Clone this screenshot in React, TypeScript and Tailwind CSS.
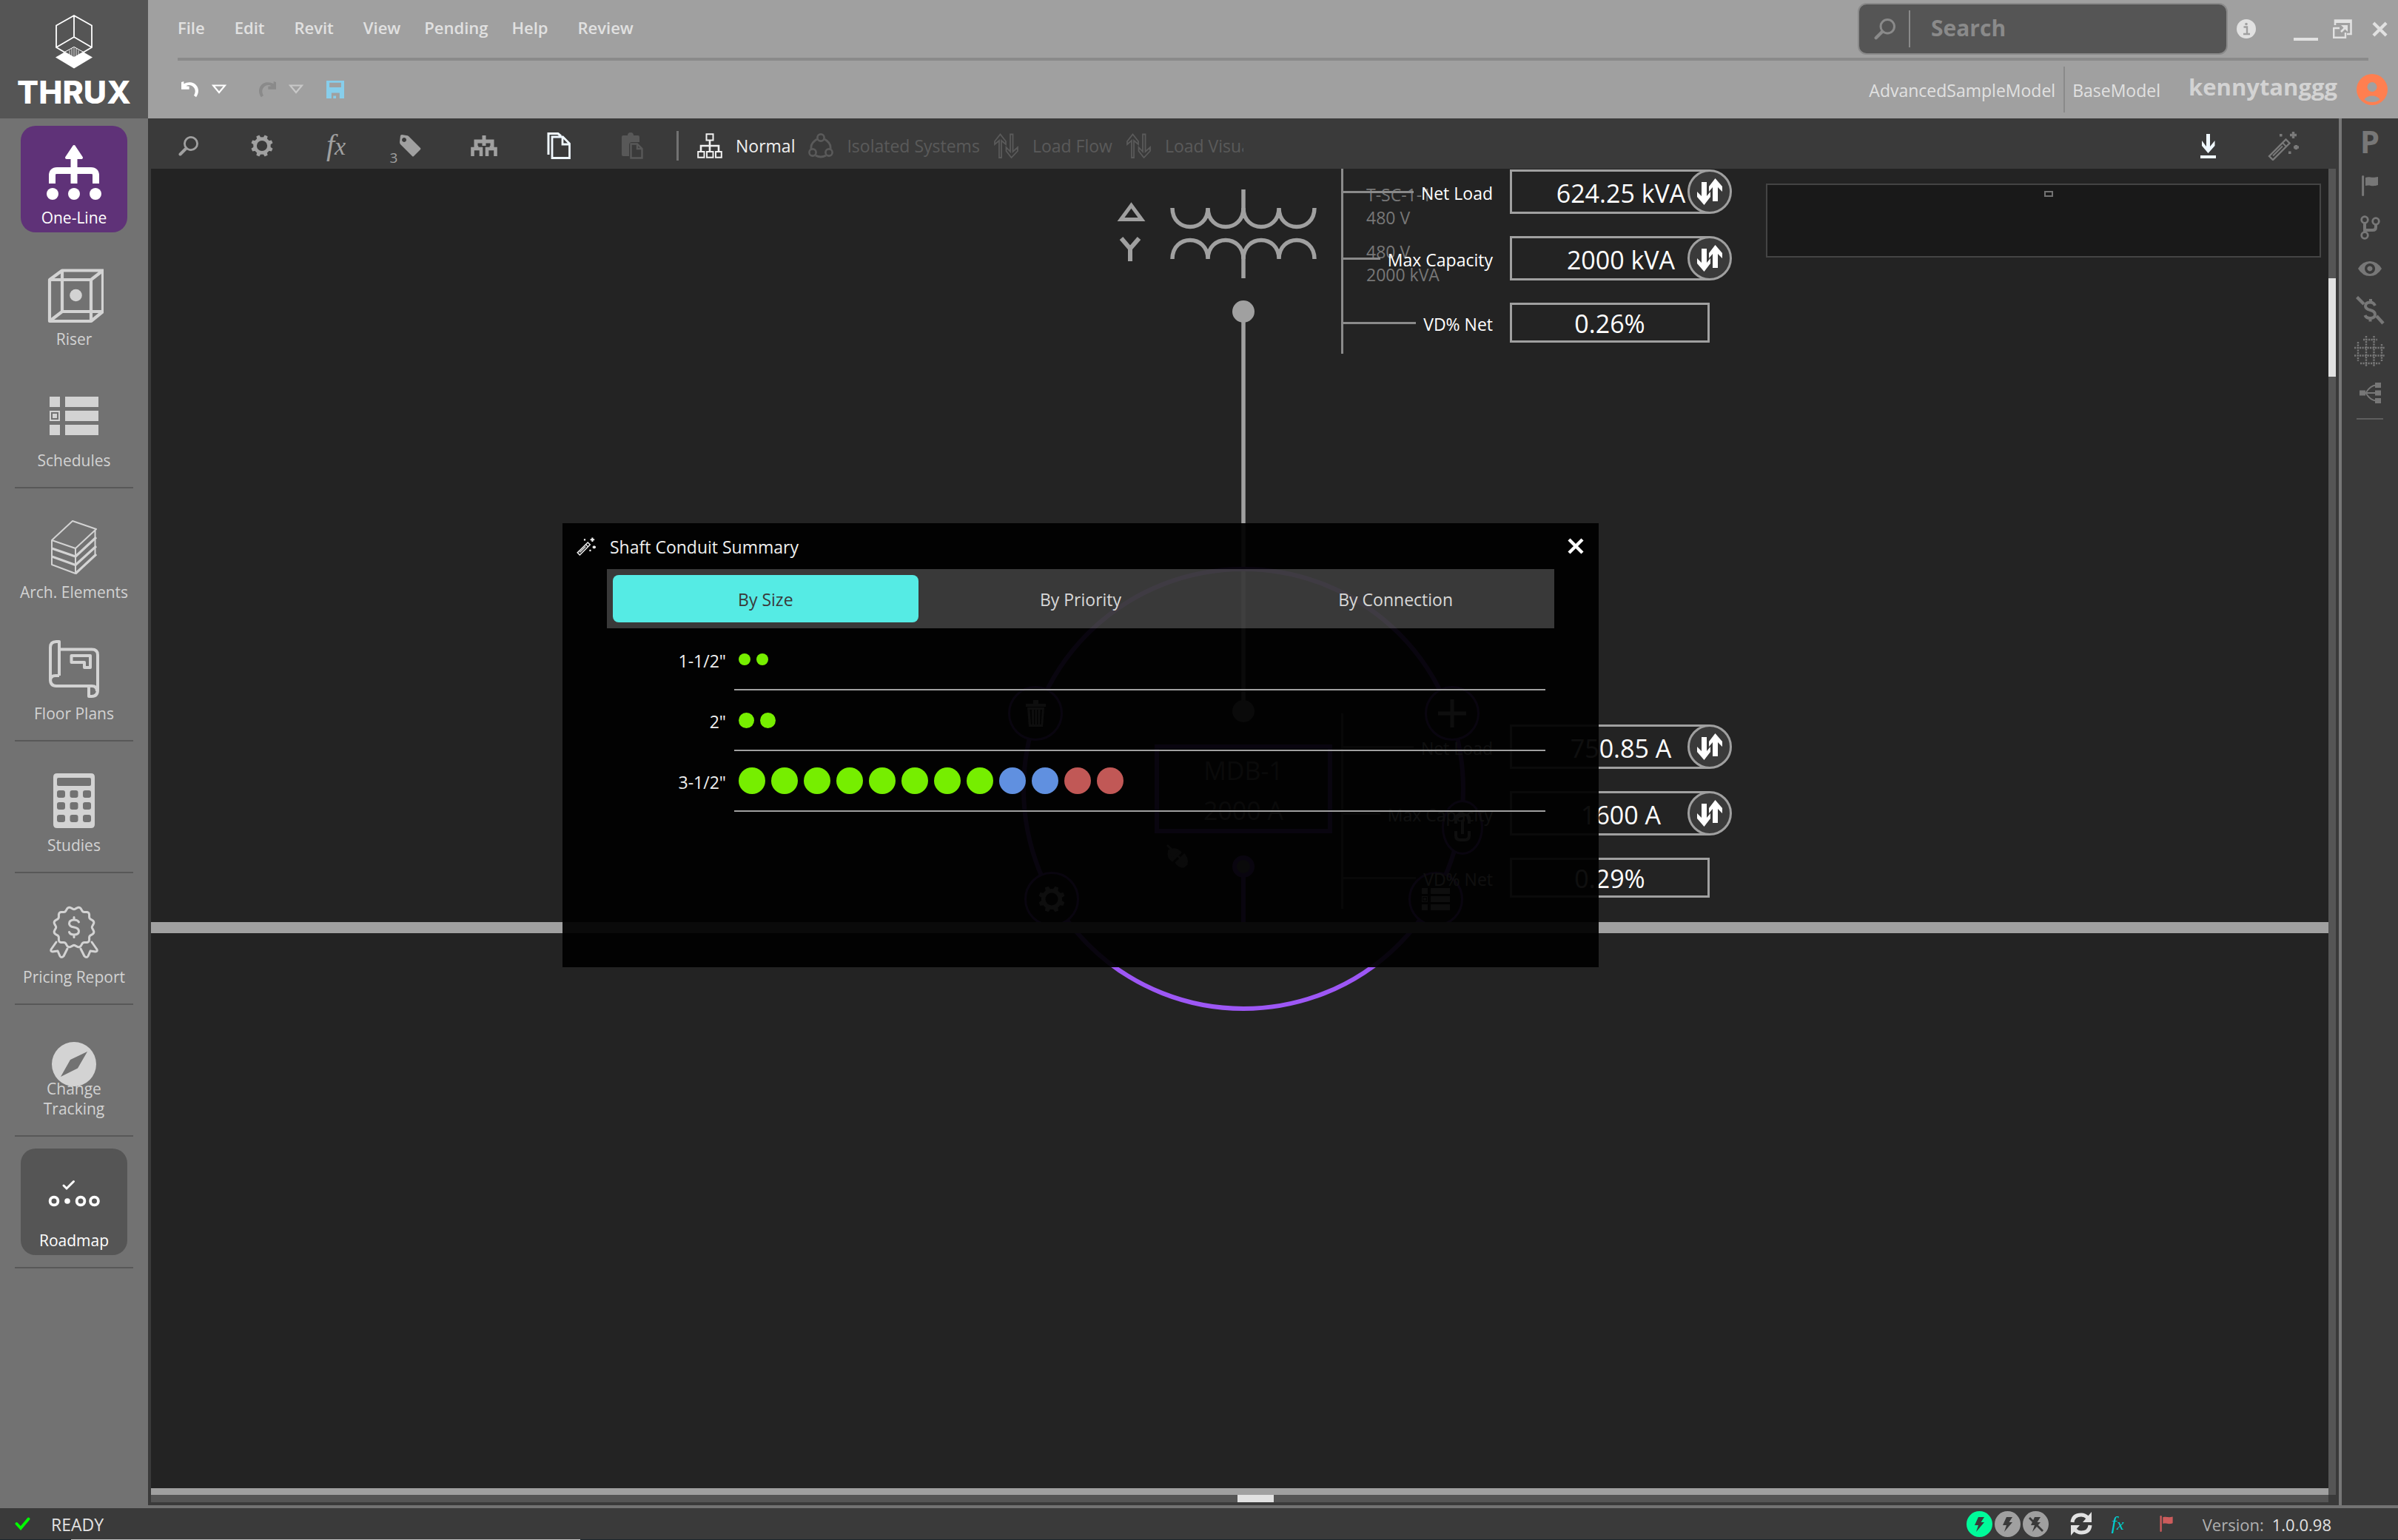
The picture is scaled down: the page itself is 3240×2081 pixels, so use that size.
import React from "react";

type SvgProps = { box: string; className: string; children: React.ReactNode };

function Svg({ box, className, children }: SvgProps) {
  return (
    <svg viewBox={box} className={"shrink-0 " + className} fill="none" aria-hidden="true">
      {children}
    </svg>
  );
}

/* ---------- shared icons ---------- */

function SearchIcon({ className }: { className: string }) {
  return (
    <Svg box="0 0 27 27" className={className}>
      <circle cx="17" cy="10" r="8.6" stroke="currentColor" strokeWidth="2.8" />
      <path d="M10 17L2.5 24.5" stroke="currentColor" strokeWidth="4" strokeLinecap="round" />
    </Svg>
  );
}

function GearIcon({ className }: { className: string }) {
  const teeth = [22.5, 67.5, 112.5, 157.5, 202.5, 247.5, 292.5, 337.5];
  return (
    <Svg box="-15 -15 30 30" className={className}>
      <circle r="9.4" stroke="currentColor" strokeWidth="4.6" />
      {teeth.map((a) => (
        <path key={a} d="M-2.9 -10.5L-2.1 -14.8H2.1L2.9 -10.5z" fill="currentColor" transform={`rotate(${a})`} />
      ))}
    </Svg>
  );
}

function WandIcon({ className }: { className: string }) {
  return (
    <Svg box="0 0 42 39" className={className}>
      <path d="M2 33L24.500 10.500L29.500 15.500L7 38z" stroke="currentColor" strokeWidth="2.4" />
      <path d="M20 15L25 20M7 32.500L20 19.500" stroke="currentColor" strokeWidth="2" />
      <path d="M34.500 0V9M30 4.500H39" stroke="currentColor" strokeWidth="3.4" />
      <path d="M38.300 18V24M35 21H42" stroke="currentColor" strokeWidth="3.600" />
      <path d="M16 3h3.500v3.500H16zM28 26.500h3.500V30H28z" fill="currentColor" />
    </Svg>
  );
}

function FlagIcon({ className }: { className: string }) {
  return (
    <Svg box="0 0 22 28" className={className}>
      <path d="M1.600 1.500V26.500" stroke="currentColor" strokeWidth="3" strokeLinecap="round" />
      <path d="M5 3c5-2 8 1 17-1v11c-8 3-11-1-17 1z" fill="currentColor" />
    </Svg>
  );
}

function CloseIcon({ className }: { className: string }) {
  return (
    <Svg box="0 0 22 22" className={className}>
      <path d="M2 2L20 20M20 2L2 20" stroke="currentColor" strokeWidth="4.400" />
    </Svg>
  );
}

function ListIcon({ className }: { className: string }) {
  return (
    <Svg box="7 14 66 52" className={className}>
      <path
        fillRule="evenodd"
        fill="currentColor"
        d="M7 14H21V28H7zM28 14H73V28H28zM7 33H21V47H7zM9 35V45H19V35zM11 37H17V43H11zM28 33H73V47H28zM7 52H21V66H7zM28 52H73V66H28z"
      />
    </Svg>
  );
}

function SwapIcon({ className }: { className: string }) {
  return (
    <Svg box="0 0 36 36" className={className}>
      <path d="M7 5H14V24L19 18V25L10.500 36L1 25V18L7 24z" fill="currentColor" />
      <path d="M29 31H22V12L17 18V11L25.500 0L35 11V18L29 12z" fill="currentColor" />
    </Svg>
  );
}

/* ---------- left navigation ---------- */

function waveBadge() {
  const pts: string[] = [];
  for (let i = 0; i <= 180; i++) {
    const a = (i / 180) * Math.PI * 2;
    const r = 26 + 1.7 * Math.cos(a * 12 + Math.PI);
    pts.push(`${(40 + r * Math.sin(a)).toFixed(1)} ${(33 - r * Math.cos(a)).toFixed(1)}`);
  }
  return "M" + pts.join("L") + "z";
}

const navIcons: Record<string, React.ReactNode> = {
  oneline: (
    <>
      <path d="M40 4L50 19H30z" fill="currentColor" stroke="currentColor" strokeWidth="4" strokeLinejoin="round" />
      <path d="M40 18V54M10.500 54V43Q10.500 36.500 17 36.500H63Q69.500 36.500 69.500 43V54" stroke="currentColor" strokeWidth="9" />
      <circle cx="11" cy="68" r="8" fill="currentColor" />
      <circle cx="40" cy="68" r="8" fill="currentColor" />
      <circle cx="69" cy="68" r="8" fill="currentColor" />
    </>
  ),
  riser: (
    <>
      <path
        d="M7 20H63V76H7zM24 7.500H79V63H24zM7 20L24 7.500M63 20L79 7.500M63 76L79 63M7 76L24 63"
        stroke="currentColor"
        strokeWidth="4.200"
        strokeLinejoin="round"
      />
      <circle cx="42.500" cy="41" r="8.300" fill="currentColor" />
    </>
  ),
  schedules: (
    <path
      fillRule="evenodd"
      fill="currentColor"
      d="M7 14H21V28H7zM28 14H73V28H28zM7 33H21V47H7zM9 35V45H19V35zM11 37H17V43H11zM28 33H73V47H28zM7 52H21V66H7zM28 52H73V66H28z"
    />
  ),
  arch: (
    <>
      <path
        d="M38 4L70 15L42 41L10 30zM10 30V63L42 75L70 49M42 41V75M68.500 17V49"
        stroke="currentColor"
        strokeWidth="2"
        strokeLinejoin="round"
      />
      <path d="M10 41L42 52L70 26M10 52L42 63.500L70 38M42 75L70 49" stroke="currentColor" strokeWidth="3.200" strokeLinejoin="round" />
    </>
  ),
  floor: (
    <g stroke="currentColor" strokeWidth="4" strokeLinejoin="round">
      <path d="M20 49V3H16Q8 3 8 11V54Q8 63 16 63H60M8 56Q8 49 15 49H20" />
      <path d="M20 13.500H64Q72 13.500 72 21V68Q72 77 64 77H60V63H64Q71 63 71 70" />
      <path d="M36.500 22H62V38H54V31H36.500z" />
    </g>
  ),
  studies: (
    <path
      fillRule="evenodd"
      fill="currentColor"
      d="M17 3H63Q68 3 68 8V72Q68 77 63 77H17Q12 77 12 72V8Q12 3 17 3zM19 9Q17 9 17 11V18Q17 20 19 20H61Q63 20 63 18V11Q63 9 61 9zM20 26q-3 0-3 3v4q0 3 3 3h5q3 0 3-3v-4q0-3-3-3zM37.500 26q-3 0-3 3v4q0 3 3 3h5q3 0 3-3v-4q0-3-3-3zM55 26q-3 0-3 3v4q0 3 3 3h5q3 0 3-3v-4q0-3-3-3zM20 42q-3 0-3 3v4q0 3 3 3h5q3 0 3-3v-4q0-3-3-3zM37.500 42q-3 0-3 3v4q0 3 3 3h5q3 0 3-3v-4q0-3-3-3zM55 42q-3 0-3 3v4q0 3 3 3h5q3 0 3-3v-4q0-3-3-3zM20 59q-3 0-3 3v4q0 3 3 3h5q3 0 3-3v-4q0-3-3-3zM37.500 59q-3 0-3 3v4q0 3 3 3h5q3 0 3-3v-4q0-3-3-3zM55 59q-3 0-3 3v4q0 3 3 3h5q3 0 3-3v-4q0-3-3-3z"
    />
  ),
  pricing: (
    <g stroke="currentColor" strokeWidth="3" strokeLinejoin="round" strokeLinecap="round">
      <path d={waveBadge()} />
      <path d="M46.500 26Q45 23 40 23Q33.500 23 33.500 28Q33.500 32 40 33Q46.500 34 46.500 38.500Q46.500 43 40 43Q34.500 43 33.500 39.500M40 19.500V23M40 43V46.500" />
      <path d="M16 53L9 63Q8 66 11 66L18 65L21 72Q23 75 26 72L31 62" />
      <path d="M64 53L71 63Q72 66 69 66L62 65L59 72Q57 75 54 72L49 62" />
    </g>
  ),
  change: <path fillRule="evenodd" fill="currentColor" d="M40 10A30 30 0 1 1 40 70A30 30 0 1 1 40 10zM58 23L35 34L22 57L45 45.500z" />,
  roadmap: (
    <>
      <g stroke="currentColor" strokeWidth="3.800">
        <circle cx="13" cy="47" r="5.400" />
        <circle cx="49" cy="47" r="5.400" />
        <circle cx="67.500" cy="47" r="5.400" />
      </g>
      <circle cx="31" cy="47" r="3.800" fill="currentColor" />
      <path d="M26 26L30 30L39.500 20.500" stroke="currentColor" strokeWidth="3" strokeLinecap="round" />
    </>
  ),
};

const navGroups: { id: string; label: string; tone?: string }[][] = [
  [
    { id: "oneline", label: "One-Line", tone: "bg-[#5f3278] text-white" },
    { id: "riser", label: "Riser" },
    { id: "schedules", label: "Schedules" },
  ],
  [
    { id: "arch", label: "Arch. Elements" },
    { id: "floor", label: "Floor Plans" },
  ],
  [{ id: "studies", label: "Studies" }],
  [{ id: "pricing", label: "Pricing Report" }],
  [{ id: "change", label: "Change Tracking" }],
  [{ id: "roadmap", label: "Roadmap", tone: "bg-[#555] text-white" }],
];

function Logo() {
  return (
    <div className="flex h-40 flex-col items-center bg-[#555] pt-5 text-white">
      <Svg box="0 0 50 73" className="h-[73px] w-[50px]">
        <path d="M0 57.500L25 43L50 57.500L25 72.500z" fill="currentColor" />
        <path d="M12 50.500L25 43.500L38 50.500L25 58.500z" fill="#555" stroke="#fff" />
        <path d="M19 48V54M22 46V56M25 45V58M28 46V56M31 48V54" stroke="#ccc" strokeWidth="1.200" />
        <path d="M1 14.500L25 1L49 14.500V44L25 58L1 44zM25 1V30M1 44L25 30L49 44" stroke="currentColor" strokeWidth="1.800" />
      </Svg>
      <div className="mt-2 font-['Inter',sans-serif] text-[43px] leading-[46px] font-extrabold">THRUX</div>
    </div>
  );
}

function Sidebar() {
  return (
    <aside className="w-[200px] shrink-0 bg-[#727272] text-[#d3d3d3]">
      <Logo />
      <nav className="flex flex-col px-5 pt-2.5">
        {navGroups.map((group, i) => (
          <div key={i} className={"flex flex-col items-center gap-5 border-b-2 border-[#585858] pb-4 " + (i === 0 ? "" : "pt-4")}>
            {group.map((item) => (
              <button key={item.id} className={"grid h-36 w-36 grid-cols-1 grid-rows-1 rounded-[20px] " + (item.tone ?? "")}>
                <Svg box="0 0 80 80" className="col-start-1 row-start-1 mt-6 size-20 self-start justify-self-center">
                  {navIcons[item.id]}
                </Svg>
                <span
                  className={
                    "col-start-1 row-start-1 self-end justify-self-center pb-1.5 text-[21px] leading-[27px] " +
                    (item.id === "change" ? "w-[100px]" : "whitespace-nowrap")
                  }
                >
                  {item.label}
                </span>
              </button>
            ))}
          </div>
        ))}
      </nav>
    </aside>
  );
}

/* ---------- header ---------- */

const menu: [string, string][] = [
  ["File", "pr-10"],
  ["Edit", "pr-10"],
  ["Revit", "pr-10"],
  ["View", "pr-8"],
  ["Pending", "pr-8"],
  ["Help", "pr-10"],
  ["Review", ""],
];

function CaretIcon({ className }: { className: string }) {
  return (
    <Svg box="0 0 20 14" className={"h-3.5 w-5 " + className}>
      <path d="M2 1.500H18L10 11z" stroke="currentColor" strokeWidth="2.200" />
    </Svg>
  );
}

function UndoIcon({ className }: { className: string }) {
  return (
    <Svg box="0 0 72 66" className={"h-[22px] w-6 " + className}>
      <path d="M0 3L10 0V10C26 0 52 0 64 20C72 34 70 50 60 64L51 57C58 44 58 34 50 24C42 14 28 12 19 19L32 20V32H0z" fill="currentColor" />
    </Svg>
  );
}

function Header() {
  return (
    <header className="flex h-40 flex-col bg-[#a0a0a0] text-[#e1e1e1]">
      <div className="flex h-[78px] items-center pr-3.5 pl-10">
        <nav className="flex pb-1 text-[22px] leading-8 font-semibold">
          {menu.map(([name, pad]) => (
            <button key={name} className={pad}>
              {name}
            </button>
          ))}
        </nav>
        <label className="ml-auto flex h-[70px] w-[500px] items-center rounded-[12px] border-2 border-[#8a8a8a] bg-[#555] pl-5 text-[#8a8a8a]">
          <SearchIcon className="size-[29px]" />
          <span className="ml-[18px] h-[50px] w-0.5 bg-[#8a8a8a]" />
          <input
            aria-label="Search"
            placeholder="Search"
            className="ml-7 min-w-0 flex-1 bg-transparent pb-1 text-[30px] font-bold outline-none placeholder:text-[#8a8a8a]"
          />
        </label>
        <button aria-label="Information" className="ml-3">
          <Svg box="0 0 26 26" className="size-[26px]">
            <circle cx="13" cy="13" r="13" fill="currentColor" />
            <circle cx="13" cy="6.500" r="1.800" fill="#a0a0a0" />
            <path d="M9.500 10.500H14V20M9 20H18" stroke="#a0a0a0" strokeWidth="2.400" />
          </Svg>
        </button>
        <button aria-label="Minimize" className="mt-7 ml-[51px] h-1 w-[33px] bg-[#e1e1e1]" />
        <button aria-label="Restore" className="ml-5">
          <Svg box="0 0 26 26" className="size-[26px]">
            <path d="M3 8V1.500H24.500V20H19" stroke="currentColor" strokeWidth="2.600" />
            <path d="M2 1H25V5H2z" fill="currentColor" />
            <path d="M1.200 11V24.800H17V18M1 12H9" stroke="currentColor" strokeWidth="2.400" />
            <path d="M11 17L18 10" stroke="currentColor" strokeWidth="2.600" />
            <path d="M11 8H20V17z" fill="currentColor" />
          </Svg>
        </button>
        <button aria-label="Close" className="ml-[27px]">
          <CloseIcon className="size-[21px]" />
        </button>
      </div>
      <div className="mr-10 ml-10 h-1 bg-[#8a8a8a]" />
      <div className="flex flex-1 items-center pr-3.5 pl-[45px]">
        <button aria-label="Undo">
          <UndoIcon className="text-white" />
        </button>
        <button aria-label="Undo history" className="ml-[17px]">
          <CaretIcon className="text-white" />
        </button>
        <button aria-label="Redo" className="ml-[43px]">
          <UndoIcon className="-scale-x-100 text-[#8a8a8a]" />
        </button>
        <button aria-label="Redo history" className="ml-[17px]">
          <CaretIcon className="text-[#c8c8c8]" />
        </button>
        <button aria-label="Save" className="ml-[31px]">
          <Svg box="0 0 70 70" className="size-6 text-[#87ceeb]">
            <path fillRule="evenodd" fill="currentColor" d="M0 0H70V70H52V48H20V70H0zM12 8V26H58V8zM27 60H38V70H27z" />
          </Svg>
        </button>
        <span className="ml-auto pt-0.5 text-[23px] leading-8">AdvancedSampleModel</span>
        <span className="ml-[11px] h-[62px] w-0.5 bg-[#8a8a8a]" />
        <span className="ml-2.5 pt-0.5 text-[23px] leading-8">BaseModel</span>
        <span className="ml-[38px] pb-2 text-[31px] leading-10 font-bold text-[#d3d3d3]">kennytanggg</span>
        <button aria-label="Account" className="ml-[26px]">
          <Svg box="0 0 42 42" className="size-[42px]">
            <circle cx="21" cy="21" r="21" fill="#ff7f50" />
            <circle cx="21" cy="17.500" r="6.500" fill="#a0a0a0" />
            <path d="M10.500 34.500Q14 29.500 21 29.500T31.500 34.500Q27 38 21 38T10.500 34.500z" fill="#a0a0a0" />
          </Svg>
        </button>
      </div>
    </header>
  );
}

/* ---------- toolbar ---------- */

function ToolCell({ label, children }: { label: string; children: React.ReactNode }) {
  return (
    <button aria-label={label} className="flex h-full w-[100px] items-center justify-center">
      {children}
    </button>
  );
}

function FlowArrows() {
  return (
    <Svg box="0 0 35 34" className="h-[34px] w-[35px]">
      <path d="M8 33V10L2 15V11L9.500 1.500L17 11V15L11 10V33zM23 1.500V25L17.500 19V24L24.500 33L33 24V19L26.500 25V1.500z" stroke="currentColor" strokeWidth="1.800" />
    </Svg>
  );
}

function Toolbar() {
  return (
    <div className="flex h-[68px] items-center bg-[#3a3a3a] pt-1.5 pl-1 text-[#a0a0a0]">
      <ToolCell label="Find">
        <SearchIcon className="size-[27px]" />
      </ToolCell>
      <ToolCell label="Settings">
        <GearIcon className="size-[30px]" />
      </ToolCell>
      <ToolCell label="Formula">
        <span className="inline-flex items-baseline font-['Liberation_Serif',serif] italic">
          <span className="text-[40px] leading-9">f</span>
          <span className="text-[34px] leading-9">x</span>
        </span>
      </ToolCell>
      <ToolCell label="Tags">
        <span className="pt-8 text-[19px] leading-[18px]">3</span>
        <Svg box="0 0 30 30" className="mr-3 ml-0.5 size-[30px]">
          <path
            fillRule="evenodd"
            fill="currentColor"
            d="M2 1.500Q2 0 4 0L10 1Q12 1 13 2L29 18Q30 19 29 20L20 29Q19 30 18 29L2 13Q1 12 1 10zM7 4a3 3 0 1 0 .1 0z"
          />
        </Svg>
      </ToolCell>
      <ToolCell label="Hierarchy">
        <Svg box="0 0 36 28" className="h-7 w-9">
          <path d="M18 0V14M7 17V8H29V17" stroke="currentColor" strokeWidth="5" />
          <path d="M2.500 28V18H14V28M22 28V18H33.500V28M8 14V20M28 14V20" stroke="currentColor" strokeWidth="4.600" />
        </Svg>
      </ToolCell>
      <ToolCell label="Copy">
        <Svg box="0 0 33 36" className="h-9 w-[33px] text-[#f0f8ff]">
          <path d="M8 6V34.500H31.500V15L22.500 6zM22 6V16H31" stroke="currentColor" strokeWidth="2.800" />
          <path d="M3 30V1.500H16L20 5" stroke="currentColor" strokeWidth="3" />
        </Svg>
      </ToolCell>
      <ToolCell label="Paste">
        <Svg box="0 0 29 36" className="h-9 w-[29px] text-[#585858]">
          <path d="M2 4H8Q8 0 12 0T16 4H22Q24 4 24 6V13H14Q10 13 10 17V32H2Q0 32 0 30V6Q0 4 2 4z" fill="currentColor" />
          <path d="M12.500 15.500H21L27.500 22V34.500H12.500zM21 15.500V22H27.500" stroke="currentColor" strokeWidth="2.400" />
        </Svg>
      </ToolCell>
      <span className="ml-2.5 h-10 w-[3px] shrink-0 bg-[#727272]" />
      <div className="ml-[25px] flex w-[738px] items-center gap-[18px] overflow-hidden text-[23px] leading-8 whitespace-nowrap text-[#5a5a5a]">
        <button className="flex items-center gap-[18px] text-[#f0f0f0]">
          <Svg box="0 0 34 34" className="size-[34px]">
            <path d="M12.500 1.200H21.500V9.500H12.500zM1.200 25H9.500V32.800H1.200zM13 25H21.500V32.800H13zM25 25H32.800V32.800H25z" stroke="currentColor" strokeWidth="2" />
            <path d="M17 10V24M5 24V17H29V24" stroke="currentColor" strokeWidth="2.600" />
          </Svg>
          Normal
        </button>
        <button className="flex items-center gap-[18px]">
          <Svg box="0 0 34 34" className="size-[34px]">
            <circle cx="17" cy="6" r="4.600" stroke="currentColor" strokeWidth="2.600" />
            <circle cx="6" cy="26" r="4.600" stroke="currentColor" strokeWidth="2.600" />
            <circle cx="28" cy="26" r="4.600" stroke="currentColor" strokeWidth="2.600" />
            <path d="M12 8Q3 13 4 21M22 8Q31 13 30 21M10 30Q17 34 24 30" stroke="currentColor" strokeWidth="2.800" />
          </Svg>
          Isolated Systems
        </button>
        <button className="flex items-center gap-[18px]">
          <FlowArrows />
          Load Flow
        </button>
        <button className="flex items-center gap-[18px]">
          <FlowArrows />
          Load Visualization
        </button>
      </div>
      <button aria-label="Download" className="mr-[70px] ml-auto text-[#f0f8ff]">
        <Svg box="0 0 21 33" className="h-[33px] w-[21px]">
          <path d="M8 0H13V17L19.500 9V16L10.500 26L2 16V9L8 17zM0 29H21V33H0z" fill="currentColor" />
        </Svg>
      </button>
      <button aria-label="Wizard" className="mr-[54px] text-[#7a7a7a]">
        <WandIcon className="h-[39px] w-[42px]" />
      </button>
    </div>
  );
}

/* ---------- right rail ---------- */

const railCell = "flex h-14 w-full items-center justify-center";

function Rail() {
  return (
    <aside className="flex w-20 shrink-0 flex-col items-center border-l-4 border-[#777] bg-[#3a3a3a] pt-[7px] text-[#777]">
      <button className={railCell + " pb-2 text-[42px] leading-none font-bold"}>P</button>
      <button aria-label="Flags" className={railCell}>
        <FlagIcon className="h-7 w-[22px]" />
      </button>
      <button aria-label="Branches" className={railCell}>
        <Svg box="0 0 27 33" className="h-[33px] w-[27px]">
          <circle cx="6" cy="6" r="4.300" stroke="currentColor" strokeWidth="2.800" />
          <circle cx="21" cy="8" r="4.300" stroke="currentColor" strokeWidth="2.800" />
          <circle cx="6" cy="27" r="4.300" stroke="currentColor" strokeWidth="2.800" />
          <path d="M6 10V23M6 20H17Q21 20 21 16V12" stroke="currentColor" strokeWidth="4" />
        </Svg>
      </button>
      <button aria-label="Visibility" className={railCell}>
        <Svg box="0 0 32 20" className="h-5 w-8">
          <path
            fillRule="evenodd"
            fill="currentColor"
            d="M0 10Q6 0 16 0T32 10Q26 20 16 20T0 10zM16 3a7 7 0 1 0 .1 0zM16 6.500a3.500 3.500 0 1 1-.1 0z"
          />
        </Svg>
      </button>
      <button aria-label="Hide pricing" className={railCell}>
        <Svg box="0 0 39 39" className="size-[39px]">
          <path d="M1.500 1.500L11 11M28 27L37 37" stroke="currentColor" strokeWidth="4.400" />
          <path d="M26 13Q24 8.500 19.500 8.500Q13 8.500 13 13.500Q13 17.500 19.500 19Q26 20.500 26 25Q26 30 19.500 30Q14 30 12.500 26M20 4V9M19.500 30V34.500" stroke="currentColor" strokeWidth="4" />
        </Svg>
      </button>
      <button aria-label="Grid" className={railCell}>
        <Svg box="-21 -21 42 42" className="size-[42px]">
          <path
            d="M-5 -21V21M5.500 -21V21M-21 -5H21M-21 5.500H21M-9 -16H10M-13 16H14M-16 -13V13M16 -10V13"
            stroke="currentColor"
            strokeWidth="2.400"
            strokeDasharray="2.200 1.300"
          />
        </Svg>
      </button>
      <button aria-label="Network" className={railCell}>
        <Svg box="0 0 29 28" className="h-7 w-[29px]">
          <path d="M0 10.500H8V17.500H0zM21 0H29V7H21zM21 10.500H29V17.500H21zM21 21H29V28H21z" fill="currentColor" />
          <path d="M7 14H22M9 13Q15 4 22 3.500M9 15Q15 24 22 24.500" stroke="currentColor" strokeWidth="2" />
        </Svg>
      </button>
      <div className="mt-1.5 h-0.5 w-9 bg-[#5e5e5e]" />
    </aside>
  );
}

/* ---------- diagram canvas ---------- */

type Metric = { label: string; value: string; toggle: boolean };

function MetricGroup({ className, items }: { className: string; items: Metric[] }) {
  return (
    <div className={"absolute flex w-[498px] flex-col gap-[30px] border-l-[3px] border-[#8a8a8a] py-[15px] " + className}>
      {items.map((m) => (
        <div key={m.label} className="relative flex items-center">
          <span className="h-[3px] flex-1 bg-[#8a8a8a]" />
          <span className="mr-[23px] ml-2.5 pt-1 text-[23px] leading-8 text-white">{m.label}</span>
          <span
            className={
              "w-[270px] border-[3px] border-[#a0a0a0] text-center text-[34px] text-white " +
              (m.toggle ? "h-[60px] pl-[30px] leading-[58px]" : "h-[54px] leading-[50px]")
            }
          >
            {m.value}
          </span>
          {m.toggle && (
            <button
              aria-label={"Switch " + m.label}
              className="absolute -right-[30px] flex size-[60px] items-center justify-center rounded-full border-[3px] border-[#a0a0a0] bg-[#3a3a3a] text-white"
            >
              <SwapIcon className="size-9" />
            </button>
          )}
        </div>
      ))}
    </div>
  );
}

const ringButton = "absolute flex items-center justify-center border-[3px] border-[#9d57f5] bg-[#232323] text-[#e1e1e1]";

function Canvas() {
  return (
    <main className="relative min-h-0 min-w-0 overflow-hidden border-b-[9px] border-[#a0a0a0] bg-[#232323]">
      <svg viewBox="0 0 2200 1200" className="absolute top-0 left-0 h-[1200px] w-[2200px]" fill="none" aria-hidden="true">
        <g stroke="#a0a0a0" strokeWidth="5.500">
          <path d="M1324.500 49.500L1338.500 68.500H1310.500z" strokeWidth="5" />
          <path d="M1311 94L1323 108L1335 94M1323 107V125" strokeWidth="6" />
          <path d="M1380 53C1380 87 1428 87 1428 53C1428 87 1476 87 1476 53C1476 87 1524 87 1524 53C1524 87 1572 87 1572 53" />
          <path d="M1380 122C1380 88 1428 88 1428 122C1428 88 1476 88 1476 122C1476 88 1524 88 1524 122C1524 88 1572 88 1572 122" />
          <path d="M1476 28V60M1476 118V148M1476 193V733" />
        </g>
        <circle cx="1476" cy="193" r="15" fill="#a0a0a0" />
        <circle cx="1476" cy="838" r="297" stroke="#9d57f5" strokeWidth="6" />
        <circle cx="1476" cy="733" r="15" fill="#a0a0a0" />
        <path d="M1476 943V1018" stroke="#9d57f5" strokeWidth="6" />
        <circle cx="1476" cy="943" r="12" fill="#a0a0a0" stroke="#9d57f5" strokeWidth="6" />
        <g stroke="#a0a0a0" strokeWidth="4">
          <path d="M1373 914L1400 941" strokeWidth="3" />
          <path d="M1376 922q-2 8 4 12l10-10q-6-6-14-2zM1386 938l10-10q6 8 0 14q-6 2-10-4z" fill="#a0a0a0" />
        </g>
      </svg>

      <div className="absolute top-[778px] left-[1356px] h-[120px] w-60 border-[6px] border-[#9d57f5] pt-0.5 text-center text-[34px] leading-[54px] text-[#a0a0a0]">
        MDB-1
        <br />
        2000 A
      </div>

      <div className="absolute top-5 left-[1642px] flex flex-col gap-[15px] text-[23px] leading-[31px] text-[#777]">
        <div>
          T-SC-1-1
          <br />
          480 V
        </div>
        <div>
          480 V
          <br />
          2000 kVA
        </div>
      </div>

      <MetricGroup
        className="-top-3.5 left-[1608px]"
        items={[
          { label: "Net Load", value: "624.25 kVA", toggle: true },
          { label: "Max Capacity", value: "2000 kVA", toggle: true },
          { label: "VD% Net", value: "0.26%", toggle: false },
        ]}
      />
      <button aria-label="Delete" className={ringButton + " top-[699px] left-[1158px] size-[74px] rounded-full"}>
        <Svg box="0 0 27 36" className="h-9 w-[27px]">
          <path fillRule="evenodd" fill="currentColor" d="M0 5H27V9H0zM10 0H17V5H10zM2 10H25L23 36H4zM5.500 13L7 33H8.500L8 13zM11 13V33H12.500V13zM15 13V33H16.500V13zM19.500 13L19 33H20.500L22 13z" />
        </Svg>
      </button>
      <button aria-label="Add" className={ringButton + " top-[699px] left-[1721px] size-[74px] rounded-full"}>
        <Svg box="0 0 38 38" className="size-[38px]">
          <path d="M19 0V38M0 19H38" stroke="currentColor" strokeWidth="5" />
        </Svg>
      </button>
      <button aria-label="Link" className={ringButton + " top-[853px] left-[1744px] h-[74px] w-14 rounded-[50%]"}>
        <Svg box="0 0 22 38" className="h-[38px] w-[22px]">
          <path d="M2 14V8Q2 2 8 2H14Q20 2 20 8V14M2 24V30Q2 36 8 36H14Q20 36 20 30V24M11 10V28" stroke="currentColor" strokeWidth="4" />
        </Svg>
      </button>
      <button aria-label="Configure" className={ringButton + " top-[950px] left-[1180px] size-[74px] rounded-full"}>
        <GearIcon className="size-9" />
      </button>
      <button aria-label="Details" className={ringButton + " top-[950px] left-[1699px] size-[74px] rounded-full"}>
        <ListIcon className="h-[30px] w-[38px]" />
      </button>
      <MetricGroup
        className="top-[736px] left-[1608px]"
        items={[
          { label: "Net Load", value: "750.85 A", toggle: true },
          { label: "Max Capacity", value: "1600 A", toggle: true },
          { label: "VD% Net", value: "0.29%", toggle: false },
        ]}
      />

      <div className="absolute top-[1018px] right-0 left-0 h-[15px] bg-[#a0a0a0]" />

      <div className="absolute top-5 right-2.5 flex h-[100px] w-[750px] justify-center border-2 border-[#444] bg-[#191919] pt-2 pl-3.5">
        <span className="h-2 w-3 border-2 border-[#727272]" />
      </div>

      <ConduitDialog />
    </main>
  );
}

/* ---------- dialog ---------- */

const green = "bg-[#76ee00]";
const blue = "bg-[#6090e0]";
const red = "bg-[#c15856]";

const sizes: { label: string; dot: string; colors: string[] }[] = [
  { label: '1-1/2"', dot: "size-4", colors: [green, green] },
  { label: '2"', dot: "size-[21px]", colors: [green, green] },
  {
    label: '3-1/2"',
    dot: "size-9",
    colors: [green, green, green, green, green, green, green, green, blue, blue, red, red],
  },
];

function ConduitDialog() {
  return (
    <section
      role="dialog"
      aria-label="Shaft Conduit Summary"
      className="absolute top-[479px] left-[556px] min-h-[600px] w-[1400px] bg-black/94 text-[#f0f0f0]"
    >
      <div className="flex h-[62px] items-center pr-5 pl-[19px]">
        <WandIcon className="h-[25px] w-[26px]" />
        <h2 className="ml-[19px] pt-0.5 text-[23px] leading-8">Shaft Conduit Summary</h2>
        <button aria-label="Close dialog" className="ml-auto text-white">
          <CloseIcon className="size-[22px]" />
        </button>
      </div>
      <div role="tablist" className="mx-[60px] grid h-20 grid-cols-3 bg-white/22 text-[23px] text-[#d8d8d8]">
        <button role="tab" aria-selected="true" className="my-2 mr-1.5 ml-2 rounded-lg bg-[#55ebe4] pt-0.5 text-[#3a3a3a]">
          By Size
        </button>
        <button role="tab" aria-selected="false" className="mx-[7px] my-2 pt-0.5">
          By Priority
        </button>
        <button role="tab" aria-selected="false" className="my-2 mr-2 ml-1.5 pt-0.5">
          By Connection
        </button>
      </div>
      <div className="pt-0.5 pr-[72px]">
        {sizes.map((s) => (
          <div key={s.label} className="flex h-[82px]">
            <span className="w-[221px] text-right text-[23px] leading-[84px]">{s.label}</span>
            <div className="ml-[11px] flex flex-1 items-center gap-2 border-b-2 border-[#a0a0a0] pl-1.5">
              {s.colors.map((c, i) => (
                <span key={i} className={"rounded-full " + s.dot + " " + c} />
              ))}
            </div>
          </div>
        ))}
      </div>
    </section>
  );
}

/* ---------- status bar ---------- */

function StatusBar() {
  return (
    <footer className="border-t-4 border-[#727272] bg-[#3a3a3a] text-[22px] leading-8 text-[#e1e1e1]">
      <div className="flex h-[42px] items-center pr-[90px] pl-5">
        <Svg box="0 0 21 18" className="h-[18px] w-[21px]">
          <path d="M2.500 9L8 15L18.500 2.500" stroke="#00ff00" strokeWidth="3.800" strokeLinecap="round" />
        </Svg>
        <span className="ml-7 pt-0.5 text-[23px]">READY</span>
        <div className="ml-auto flex items-center gap-[3px] text-[#3a3a3a]">
          {["#00fa9a", "#a0a0a0", "#a0a0a0"].map((c, i) => (
            <Svg key={i} box="0 0 35 35" className="size-[35px]">
              <circle cx="17.500" cy="17.500" r="17.500" fill={c} />
              <path d="M16 8H24L19.500 15H24L13 28L16 19H11z" fill="currentColor" />
              {i === 2 && <path d="M9 9L27 27" stroke="currentColor" strokeWidth="2.800" />}
            </Svg>
          ))}
        </div>
        <button aria-label="Refresh" className="ml-[29px]">
          <Svg box="0 0 30 32" className="h-8 w-[30px]">
            <path d="M3 14Q4 4 15 4Q20 4 24 8M27 18Q26 28 15 28Q10 28 6 24" stroke="currentColor" strokeWidth="5" />
            <path d="M29 0V14H17zM1 32V18H13z" fill="currentColor" />
          </Svg>
        </button>
        <span className="ml-[26px] inline-flex items-baseline font-['Liberation_Serif',serif] text-[#00ced1] italic">
          <span className="text-[26px] leading-8">f</span>
          <span className="text-[22px] leading-8">x</span>
        </span>
        <FlagIcon className="ml-12 h-[22px] w-[18px] text-[#cd5c5c]" />
        <span className="ml-10 pt-0.5 text-[#b0b0b0]">Version:</span>
        <span className="ml-[11px] pt-0.5">1.0.0.98</span>
      </div>
      <div className="h-px bg-[#1c262c] pl-24">
        <div className="h-px w-[688px] bg-[#c5c5c5]" />
      </div>
    </footer>
  );
}

export default function App() {
  return (
    <div className="flex h-screen flex-col bg-[#3a3a3a] font-['Open_Sans','Noto_Sans',sans-serif]">
      <div className="flex min-h-0 flex-1">
        <Sidebar />
        <div className="flex min-w-0 flex-1 flex-col">
          <Header />
          <div className="flex min-h-0 flex-1">
            <div className="flex min-w-0 flex-1 flex-col">
              <Toolbar />
              <div className="grid min-h-0 flex-1 grid-cols-[minmax(0,1fr)_10px] grid-rows-[minmax(0,1fr)_10px] px-1 pb-1">
                <Canvas />
                <div className="bg-[#555] pt-[148px]">
                  <div className="h-[133px] bg-[#e1e1e1]" />
                </div>
                <div className="bg-[#555] pl-[1468px]">
                  <div className="h-2.5 w-[49px] bg-[#e1e1e1]" />
                </div>
              </div>
            </div>
            <Rail />
          </div>
        </div>
      </div>
      <StatusBar />
    </div>
  );
}
